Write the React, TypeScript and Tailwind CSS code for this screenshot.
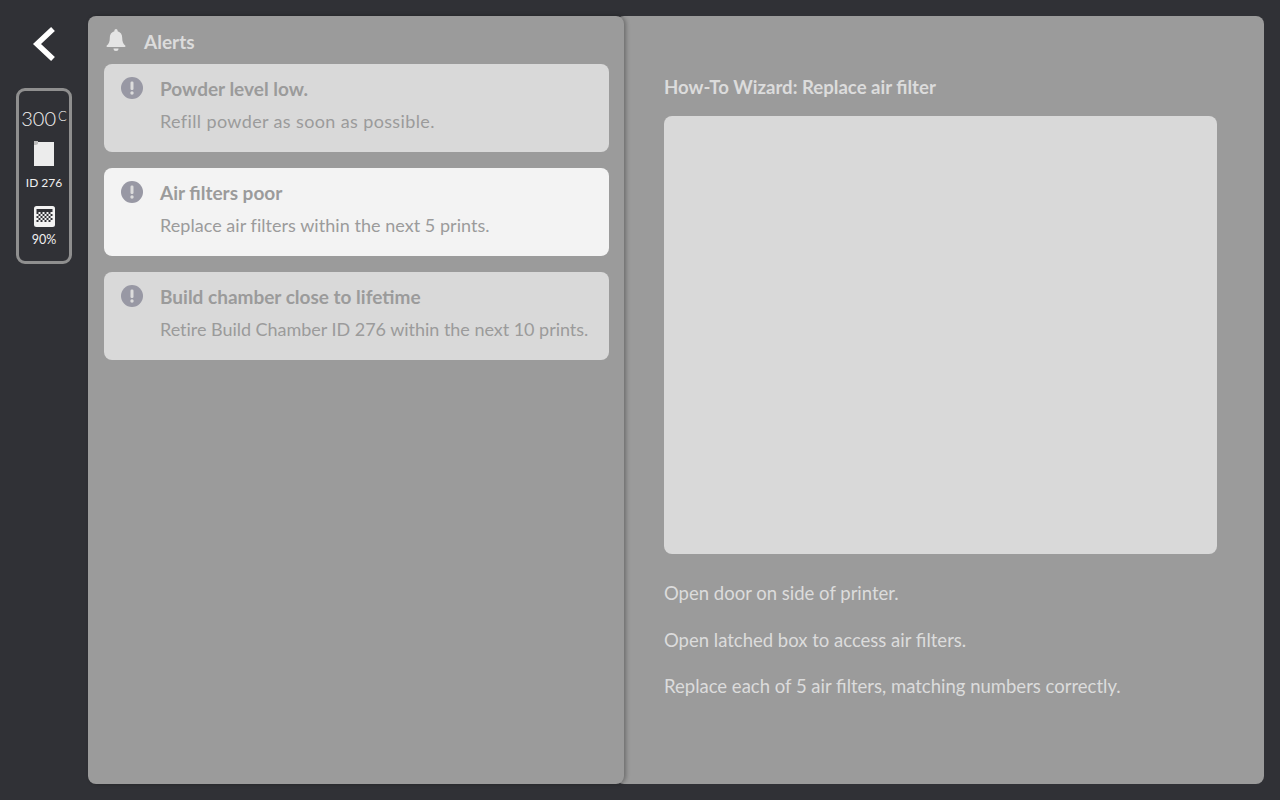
const alerts = [
  { title: 'Powder level low.', text: 'Refill powder as soon as possible.', spacing: 'tracking-[0.37px]', active: false },
  { title: 'Air filters poor', text: 'Replace air filters within the next 5 prints.', spacing: 'tracking-[0.04px]', active: true },
  { title: 'Build chamber close to lifetime', text: 'Retire Build Chamber ID 276 within the next 10 prints.', spacing: 'tracking-[-0.03px]', active: false },
];

const steps = [
  'Open door on side of printer.',
  'Open latched box to access air filters.',
  'Replace each of 5 air filters, matching numbers correctly.',
];

const BackIcon = () => (
  <svg width="28" height="36" viewBox="0 0 28 36">
    <path d="M23 3 7 18l16 15" fill="none" stroke="#ffffff" strokeWidth="5.500" strokeLinejoin="miter" />
  </svg>
);

const AlertIcon = () => (
  <svg width="22" height="22" viewBox="0 0 22 22" className="mt-px shrink-0">
    <circle cx="11" cy="11" r="11" fill="#9898a4" />
    <rect x="9.500" y="4.500" width="3" height="8.500" rx="1.200" fill="#dcdcdc" />
    <circle cx="11" cy="16" r="1.700" fill="#dcdcdc" />
  </svg>
);

const BellIcon = () => (
  <svg width="20" height="24" viewBox="0 0 20 24">
    <path d="M10 1a1.600 1.600 0 0 1 1.600 1.600v.7c3 .8 4.600 3.200 4.600 6.400 0 4.200 1 6 3 7.800.6.600.3 1.500-.6 1.500H1.400c-.9 0-1.200-.9-.6-1.500 2-1.800 3-3.600 3-7.800 0-3.200 1.600-5.600 4.600-6.400v-.7A1.600 1.600 0 0 1 10 1z" fill="#e4e4e4" />
    <path d="M7.500 20.500h5a2.500 2.500 0 0 1-5 0z" fill="#e4e4e4" />
  </svg>
);

const ChamberIcon = () => (
  <svg width="20" height="26" viewBox="0 0 20 26">
    <path d="M0 1h3l1 1h16v24H0z" fill="#ececec" />
    <path d="M0 1h4v3L2 5H0z" fill="#bdbdbd" />
  </svg>
);

const PowderIcon = () => (
  <svg width="21" height="21" viewBox="0 0 21 21">
    <rect width="21" height="21" rx="2.500" fill="#f2f2f2" />
    <rect x="2.500" y="3" width="16" height="3" fill="#303136" />
    {[6, 8, 10, 12, 14].map((y, r) =>
      [3, 5, 7, 9, 11, 13, 15, 17].map((x, c) =>
        (r + c) % 2 === 0 ? <rect key={`${x}-${y}`} x={x - 0.5} y={y} width="2" height="2" fill="#303136" /> : null
      )
    )}
  </svg>
);

export default function App() {
  return (
    <div
      className="flex h-[800px] w-[1280px] overflow-hidden bg-[#303136] p-4"
      style={{ fontFamily: 'Lato, "Open Sans", sans-serif' }}
    >
      <aside className="mr-4 flex w-14 shrink-0 flex-col items-center">
        <div className="flex h-[72px] w-14 items-start justify-center pt-[10px]">
          <BackIcon />
        </div>
        <div className="flex h-[176px] w-14 flex-col items-center rounded-[9px] border-[3px] border-[#8f8f8f] text-[#f0f0f0]">
          <div className="mt-[16px] flex items-start leading-none">
            <span className="text-[20px] font-light leading-[22px]">300</span>
            <span className="ml-[2px] text-[13px] font-light leading-[18px]">C</span>
          </div>
          <div className="mt-[11px] h-[26px]"><ChamberIcon /></div>
          <div className="mt-[8px] text-[12px] leading-[18px]">ID 276</div>
          <div className="mt-[14px] h-[21px]"><PowderIcon /></div>
          <div className="mt-[4px] text-[12.500px] leading-[18px]">90%</div>
        </div>
      </aside>

      <section className="relative z-10 flex h-[768px] w-[536px] shrink-0 flex-col rounded-lg bg-[#9b9b9b] px-4 shadow-[2px_0_4px_rgba(0,0,0,0.3)]">
        <header className="flex h-12 items-center">
          <div className="ml-[2px] w-[38px]"><BellIcon /></div>
          <h1 className="mt-[4px] text-[19px] font-bold text-[#dcdcdc]">Alerts</h1>
        </header>
        <div className="flex w-[505px] flex-col gap-4">
          {alerts.map((alert) => (
            <div
              key={alert.title}
              className={`flex h-[88px] gap-[17px] rounded-lg px-[17px] pt-[12px] ${alert.active ? 'bg-[#f3f3f3]' : 'bg-[#d9d9d9]'}`}
            >
              <AlertIcon />
              <div className="whitespace-nowrap">
                <div className="text-[19px] font-bold leading-[26px] text-[#9b9b9b]">{alert.title}</div>
                <div className={`mt-[6px] text-[18px] leading-[26px] text-[#9b9b9b] ${alert.spacing}`}>{alert.text}</div>
              </div>
            </div>
          ))}
        </div>
      </section>

      <main className="-ml-2 flex h-[768px] flex-1 flex-col rounded-lg bg-[#9b9b9b] pl-12 pr-[47px] pt-[58px]">
        <h2 className="text-[18.600px] font-bold leading-[26px] text-[#dcdcdc]">How-To Wizard: Replace air filter</h2>
        <div className="mt-4 h-[438px] w-[553px] rounded-lg bg-[#d9d9d9]" />
        <div className="mt-[26px] flex flex-col gap-[20.500px]">
          {steps.map((step) => (
            <p key={step} className="text-[18.500px] leading-[26px] text-[#dcdcdc]">{step}</p>
          ))}
        </div>
      </main>
    </div>
  );
}
